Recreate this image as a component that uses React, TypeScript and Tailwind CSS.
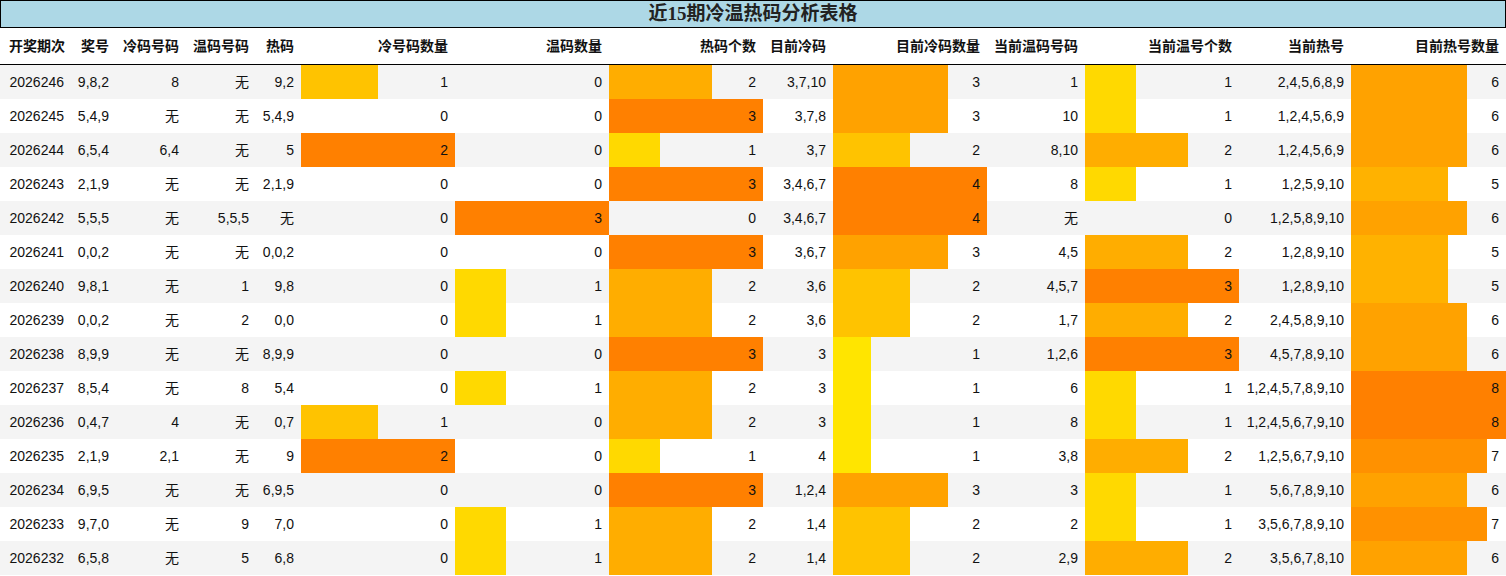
import React from "react";

type Row = (string | number)[];

const headers = [
  "开奖期次",
  "奖号",
  "冷码号码",
  "温码号码",
  "热码",
  "冷号码数量",
  "温码数量",
  "热码个数",
  "目前冷码",
  "目前冷码数量",
  "当前温码号码",
  "当前温号个数",
  "当前热号",
  "目前热号数量",
];

// columns that carry a data bar
const barCols = [5, 6, 7, 9, 11, 13];

const rows: Row[] = [
  ["2026246", "9,8,2", "8", "无", "9,2", 1, 0, 2, "3,7,10", 3, "1", 1, "2,4,5,6,8,9", 6],
  ["2026245", "5,4,9", "无", "无", "5,4,9", 0, 0, 3, "3,7,8", 3, "10", 1, "1,2,4,5,6,9", 6],
  ["2026244", "6,5,4", "6,4", "无", "5", 2, 0, 1, "3,7", 2, "8,10", 2, "1,2,4,5,6,9", 6],
  ["2026243", "2,1,9", "无", "无", "2,1,9", 0, 0, 3, "3,4,6,7", 4, "8", 1, "1,2,5,9,10", 5],
  ["2026242", "5,5,5", "无", "5,5,5", "无", 0, 3, 0, "3,4,6,7", 4, "无", 0, "1,2,5,8,9,10", 6],
  ["2026241", "0,0,2", "无", "无", "0,0,2", 0, 0, 3, "3,6,7", 3, "4,5", 2, "1,2,8,9,10", 5],
  ["2026240", "9,8,1", "无", "1", "9,8", 0, 1, 2, "3,6", 2, "4,5,7", 3, "1,2,8,9,10", 5],
  ["2026239", "0,0,2", "无", "2", "0,0", 0, 1, 2, "3,6", 2, "1,7", 2, "2,4,5,8,9,10", 6],
  ["2026238", "8,9,9", "无", "无", "8,9,9", 0, 0, 3, "3", 1, "1,2,6", 3, "4,5,7,8,9,10", 6],
  ["2026237", "8,5,4", "无", "8", "5,4", 0, 1, 2, "3", 1, "6", 1, "1,2,4,5,7,8,9,10", 8],
  ["2026236", "0,4,7", "4", "无", "0,7", 1, 0, 2, "3", 1, "8", 1, "1,2,4,5,6,7,9,10", 8],
  ["2026235", "2,1,9", "2,1", "无", "9", 2, 0, 1, "4", 1, "3,8", 2, "1,2,5,6,7,9,10", 7],
  ["2026234", "6,9,5", "无", "无", "6,9,5", 0, 0, 3, "1,2,4", 3, "3", 1, "5,6,7,8,9,10", 6],
  ["2026233", "9,7,0", "无", "9", "7,0", 0, 1, 2, "1,4", 2, "2", 1, "3,5,6,7,8,9,10", 7],
  ["2026232", "6,5,8", "无", "5", "6,8", 0, 1, 2, "1,4", 2, "2,9", 2, "3,5,6,7,8,10", 6],
];

const maxes: { [key: number]: number } = {};
barCols.forEach((c) => (maxes[c] = Math.max(...rows.map((r) => Number(r[c])))));

const barStyle = (value: number, max: number): React.CSSProperties => {
  if (!value || !max) return {};
  const ratio = value / max;
  const g = Math.round(262 - 134 * ratio);
  const color = `rgb(255,${Math.min(g, 235)},0)`;
  const pct = ratio * 100;
  return {
    background: `linear-gradient(to right, ${color} 0, ${color} ${pct}%, transparent ${pct}%)`,
  };
};

const gridCols =
  "grid grid-cols-[72px_44px_70px_70px_45px_154px_154px_154px_70px_154px_98px_154px_112px_155px]";

export default function App() {
  return (
    <div className="w-[1506px] bg-white font-['Liberation_Sans','Noto_Sans_CJK_SC',sans-serif] text-[14px] text-[#111]">
      {/* 标题 */}
      <div className="h-[28px] bg-[#add8e6] border border-black flex items-center justify-center font-['Liberation_Serif','Noto_Sans_CJK_SC',serif] text-[19px] font-bold text-[#222]">
        近15期冷温热码分析表格
      </div>
      {/* 表头 */}
      <div className={`${gridCols} h-[37px] border-b border-black font-bold`}>
        {headers.map((h) => (
          <div key={h} className="flex items-center justify-end pr-[7px] whitespace-nowrap">
            {h}
          </div>
        ))}
      </div>
      {rows.map((row, i) => (
        <div
          key={row[0] as string}
          className={`${gridCols} h-[34px] ${i % 2 === 0 ? "bg-[#f4f4f4]" : "bg-white"}`}
        >
          {row.map((cell, j) => (
            <div
              key={j}
              className={`flex items-center justify-end whitespace-nowrap ${j === 0 ? "pr-[8px]" : "pr-[7px]"}`}
              style={barCols.includes(j) ? barStyle(Number(cell), maxes[j]) : undefined}
            >
              {cell}
            </div>
          ))}
        </div>
      ))}
    </div>
  );
}
